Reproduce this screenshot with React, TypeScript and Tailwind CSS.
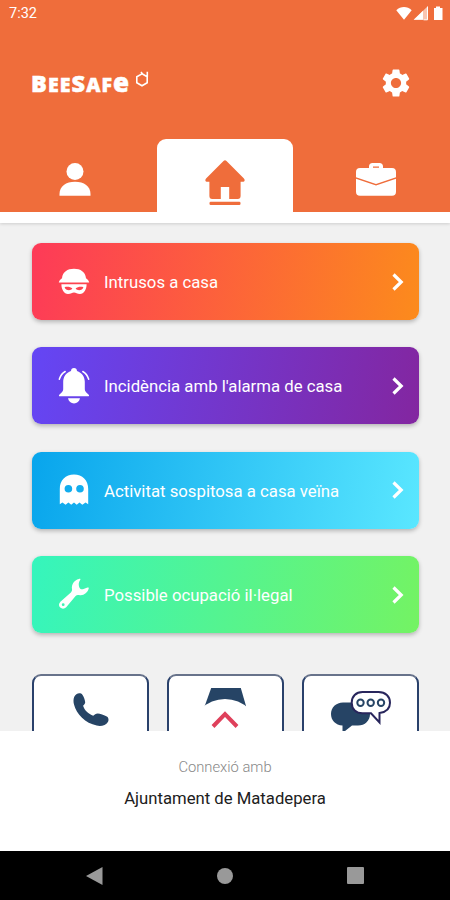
import type { ReactNode } from "react";
import { MdSettings } from "react-icons/md";

const ThiefIcon = () => (
  <svg width="32" height="36" viewBox="0 0 32 36" fill="white">
    <path d="M4 14.200C4.600 8 9.400 4.800 16 4.800s11.400 3.200 12 9.400c1.800 1.400 3 2.700 3.200 4.300H.8C1 16.900 2.200 15.600 4 14.200z" />
    <path
      fillRule="evenodd"
      d="M3.400 20.300h25.200c0 5.200-2.600 9.700-6.600 9.700-3 0-4-1.600-6-1.600S13 30 10 30c-4 0-6.600-4.500-6.600-9.700zM6.600 23.200c.7 3.200 6 4 7.800 1.300-1.900-1.700-5.400-2.200-7.800-1.300zm18.800 0c-.7 3.200-6 4-7.800 1.300 1.900-1.700 5.400-2.200 7.800-1.300z"
    />
  </svg>
);

const BellIcon = () => (
  <svg width="32" height="36" viewBox="0 0 32 36" fill="white">
    <path d="M16 0c1.800 0 3 1.100 3 2.900 4.800 1.600 7.800 5.700 7.800 10.900v7.500c0 2.200 1.800 3.600 3.700 5.100 1 .8.700 1.900-.5 1.900H2c-1.200 0-1.500-1.100-.5-1.900 1.900-1.500 3.700-2.900 3.700-5.100v-7.500C5.200 8.600 8.200 4.500 13 2.900 13 1.100 14.200 0 16 0z" />
    <path d="M10 30.300h12c-.7 3.200-3 5.200-6 5.200s-5.300-2-6-5.200z" />
    <path d="M7.200 3.500C4.600 5 2.400 7.700 1.300 11.300M24.800 3.500c2.600 1.500 4.800 4.200 5.900 7.800" fill="none" stroke="white" strokeWidth="1.500" strokeLinecap="round" />
  </svg>
);

const GhostIcon = () => (
  <svg width="32" height="36" viewBox="0 0 32 36" fill="white">
    <path
      fillRule="evenodd"
      d="M1.800 17C1.800 8 7.600 2.500 16 2.500S30.200 8 30.200 17v15.300l-2.600-1.800-3.300 2.300-2.800-2.300-2.800 2.300-2.700-2.300-2.800 2.300-2.800-2.300-2.800 2.300-3.200-2.300-2.600 1.800zM10.400 13a3.800 3.800 0 1 0 0 7.600 3.800 3.800 0 0 0 0-7.600zm11.600 0a3.800 3.800 0 1 0 0 7.600 3.800 3.800 0 0 0 0-7.600z"
    />
  </svg>
);

const WrenchIcon = () => (
  <svg width="32" height="36" viewBox="0 0 32 36" fill="white">
    <path
      fillRule="evenodd"
      d="M22.300 2.700c-1.600 2.200-2 4.600-1.100 7.200.7 2 1.900 2.800 3.700 2.300l4.600-1.700c1-.3 1.500.2 1.200 1.100-1.200 4.600-5.400 7.400-9.700 6.400-1.500-.3-2.500 0-3.400.9L8.200 30.300c-1.700 1.700-4.300 1.800-6 .3-1.700-1.600-1.600-4.200.2-5.900l10.500-9.300c1-.9 1.300-1.900 1.100-3.300-.7-4.700 2.100-8.900 6.900-10.200 1.300-.3 1.900.2 1.400.8zM5.200 26.300a1.400 1.400 0 1 0 0 2.800 1.400 1.400 0 0 0 0-2.800z"
    />
  </svg>
);

const UserIcon = () => (
  <svg width="32" height="34" viewBox="0 0 32 34" fill="white">
    <circle cx="16" cy="8.500" r="8.500" />
    <path d="M.5 32.700V31c0-8 6.500-12.300 15.500-12.300S31.500 23 31.500 31v1.700z" />
  </svg>
);

const HomeIcon = () => (
  <svg width="40" height="46" viewBox="0 0 40 46" fill="#ef6d3b">
    <path d="M18.500.9a2.200 2.200 0 0 1 3 0l17.200 17.300c1.800 1.900.9 3.600-1.400 3.600h-1.700V36c0 1.900-1 2.900-2.800 2.900h-8.600V27h-8.400v11.900H7.200c-1.800 0-2.800-1-2.800-2.900V21.800H2.700C.4 21.800-.5 20.100 1.300 18.200z" />
    <rect x="4.500" y="41.800" width="31" height="3.200" rx="1.200" />
  </svg>
);

const BriefcaseIcon = () => (
  <svg width="42" height="34" viewBox="0 0 42 34" fill="white">
    <path fillRule="evenodd" d="M14 5V3.500C14 1.200 15.300 0 17.500 0h7C26.700 0 28 1.200 28 3.500V5h9c2.700 0 4 1.300 4 4v5.200L21 21 1 14.200V9c0-2.700 1.300-4 4-4zm4-1.400v1.200h6V3.600z" />
    <path d="M1 15.700l20 6.800 20-6.800v13c0 2.700-1.300 4-4 4H5c-2.700 0-4-1.300-4-4z" />
  </svg>
);

const PhoneIcon = () => (
  <svg width="36" height="34" viewBox="0 0 36 34" fill="#264465">
    <path d="M3.700.9C5.600-.1 8.300.1 9.400 1.700c1.200 1.600 2.700 5.500 2.800 7.600 0 1.700-1.300 2.500-2.100 3.500 1.200 4.300 5.500 8.500 10.100 9.900 1.300-.5 2.600-2.100 4.500-2.100 2.100.2 6.700 1.500 9.100 2.900 1.900 1.100 2.100 3.600 1.100 5.500-2 3.300-6.600 4.600-11.200 3.600C12.500 30.400 3.300 21.300 1 11.600-.2 6.800.7 2.700 3.700.9z" />
  </svg>
);

const WatchIcon = () => (
  <svg width="44" height="44" viewBox="0 0 44 44" fill="#264465">
    <path d="M7.200 0h29.600L42 18v26H0V20z" />
  </svg>
);

const ChatIcon = () => (
  <svg width="62" height="42" viewBox="0 0 62 42">
    <path d="M13 11.500h15c7 0 12 4.800 12 11.500s-5 11.500-12 11.500h-6L12.500 42v-7.500C5.500 34 1 29.500 1 23s5-11.500 12-11.500z" fill="#264465" />
    <path
      d="M32.500 1h16C55.500 1 60 5.500 60 11.700c0 5.600-3.500 9.300-10.500 10.300v9.500L41 22.300h-8.500C26 22.300 21.700 18 21.700 11.700S26 1 32.500 1z"
      fill="white"
      stroke="#28265c"
      strokeWidth="2"
    />
    <g fill="none" stroke="#264465" strokeWidth="2">
      <circle cx="30.500" cy="11.700" r="3.200" />
      <circle cx="40.700" cy="11.700" r="3.200" />
      <circle cx="51" cy="11.700" r="3.200" />
    </g>
  </svg>
);

const StatusBar = () => (
  <div className="flex h-[26px] items-center justify-between pl-[9px] pr-[7px] text-white">
    <span className="pt-[2px] text-[14.500px] leading-none">7:32</span>
    <svg width="47" height="15" viewBox="0 0 47 15" fill="white">
      <path d="M.3 4.200C4.700-.2 11.300-.2 15.700 4.200L8 13.800z" />
      <path d="M31.500.5v13.300H17.700z" fillOpacity=".6" />
      <path d="M27 4.800v9h-9.300z" />
      <path d="M31.500.5v13.300h-4" fill="none" stroke="white" />
      <path d="M38 2h2V.5h4V2h2.500v12H38z" />
    </svg>
  </div>
);

const Logo = () => (
  <div className="flex h-[30px] items-start text-white">
    <span className="w-[101px] whitespace-nowrap font-['Open_Sans'] text-[19.500px] font-extrabold leading-[30px] tracking-[1.100px] [-webkit-text-stroke:0.500px_white]">
      <span className="text-[23.500px]">B</span>EE<span className="text-[23.500px]">S</span>AF<span className="text-[26px] leading-none">e</span>
    </span>
    <svg className="ml-[3px] mt-[3px]" width="14" height="17" viewBox="0 0 14 17" fill="none" stroke="white" strokeWidth="1.600">
      <path d="M7 2.800l5.200 2.900v6.100L7 14.800l-5.200-3V5.700zM6 1l1.500 2M12.300 5.700V.7" />
    </svg>
  </div>
);

const Tabs = () => (
  <div className="flex h-[73px] items-end">
    <div className="flex h-full w-[157px] justify-center pr-[7px] pt-[24px]">
      <UserIcon />
    </div>
    <div className="flex h-full w-[136px] justify-center rounded-t-[9px] bg-white pt-[21px]">
      <HomeIcon />
    </div>
    <div className="flex h-full w-[157px] justify-center pl-[8px] pt-[24px]">
      <BriefcaseIcon />
    </div>
  </div>
);

const alerts = [
  { label: "Intrusos a casa", icon: <ThiefIcon />, color: "from-[#fd3a58] to-[#fc8b1c]" },
  { label: "Incidència amb l'alarma de casa", icon: <BellIcon />, color: "from-[#6446f5] to-[#8326a0]" },
  { label: "Activitat sospitosa a casa veïna", icon: <GhostIcon />, color: "from-[#08a5ec] to-[#5ae7ff]" },
  { label: "Possible ocupació il·legal", icon: <WrenchIcon />, color: "from-[#35f5bd] to-[#74f363]" },
];

const AlertButton = ({ label, icon, color }: { label: string; icon: ReactNode; color: string }) => (
  <button className={`flex h-[77px] w-full shrink-0 items-center rounded-[9px] bg-linear-[100deg] pl-[26px] pr-[15px] text-white shadow-[0_2px_4px_rgba(0,0,0,0.25)] ${color}`}>
    {icon}
    <span className="ml-[14px] grow whitespace-nowrap pt-px text-left text-[16.750px] leading-5">{label}</span>
    <svg width="12" height="18" viewBox="0 0 12 18" fill="none" stroke="white" strokeWidth="3.200">
      <path d="M1.500 1.500L9.200 9l-7.700 7.500" />
    </svg>
  </button>
);

const ActionCard = ({ children }: { children: ReactNode }) => (
  <div className="flex h-[80px] flex-1 justify-center rounded-[9px] border-2 border-t-[#68738b] border-x-[#2a416b] bg-white">
    {children}
  </div>
);

const BottomSheet = () => (
  <div className="relative h-[120px] bg-white text-center">
    <div className="absolute left-[191px] top-[-32px] h-[32px] w-[68px] overflow-hidden">
      <div className="flex h-[68px] justify-center rounded-full bg-white pt-[12px]">
        <svg width="28" height="18" viewBox="0 0 28 18" fill="none" stroke="#df405b" strokeWidth="4">
          <path d="M2 15.500L14 3.200l12 12.300" />
        </svg>
      </div>
    </div>
    <p className="pt-[26px] text-[14.750px] font-light leading-5 text-[#888]">Connexió amb</p>
    <p className="mt-[12px] text-[16.700px] leading-5 text-[#202020]">Ajuntament de Matadepera</p>
  </div>
);

const NavBar = () => (
  <div className="flex h-[49px] items-center justify-between bg-black pl-[86px] pr-[86px]">
    <svg width="17" height="20" viewBox="0 0 17 20" fill="#999">
      <path d="M16.500 1v18L0 10z" />
    </svg>
    <div className="size-4 rounded-full bg-[#999]" />
    <div className="size-[17px] rounded-[1px] bg-[#999]" />
  </div>
);

export default function App() {
  return (
    <div className="flex h-[900px] w-[450px] flex-col overflow-hidden bg-[#f1f1f1] font-[Roboto,sans-serif]">
      <header className="h-[223px] shrink-0 border-b-[11px] border-white bg-[#ef6d3b] shadow-[0_1px_3px_rgba(0,0,0,0.15)]">
        <StatusBar />
        <div className="flex h-[113px] items-center justify-between pl-[31px] pr-[37px]">
          <Logo />
          <MdSettings className="size-[34px] text-white" />
        </div>
        <Tabs />
      </header>
      <main className="h-[508px] shrink-0 overflow-hidden px-[32px] pt-[20px]">
        <div className="flex w-[387px] flex-col gap-[27.400px]">
          {alerts.map((alert) => (
            <AlertButton key={alert.label} {...alert} />
          ))}
        </div>
        <div className="mt-[41px] flex w-[387px] gap-[18px]">
          <ActionCard>
            <div className="pt-[17px]">
              <PhoneIcon />
            </div>
          </ActionCard>
          <ActionCard>
            <div className="pt-[12px]">
              <WatchIcon />
            </div>
          </ActionCard>
          <ActionCard>
            <div className="pt-[15px]">
              <ChatIcon />
            </div>
          </ActionCard>
        </div>
      </main>
      <BottomSheet />
      <NavBar />
    </div>
  );
}
